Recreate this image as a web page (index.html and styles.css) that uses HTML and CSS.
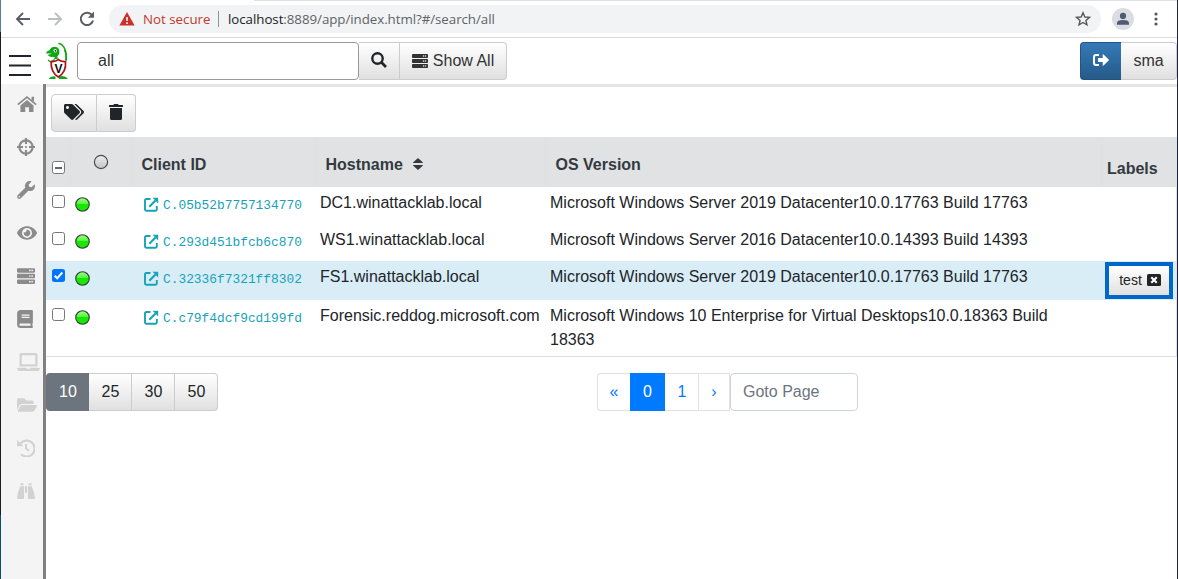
FILE: index.html
```html
<!DOCTYPE html>
<html lang="en">
<head>
<meta charset="utf-8">
<title>Search clients</title>
<link rel="stylesheet" href="styles.css">
</head>
<body>
<svg class="defs" width="0" height="0">
  <defs>
    <linearGradient id="lampGreen" x1="0" y1="0" x2="0" y2="1"><stop offset="0" stop-color="#9dff8a"/><stop offset=".42" stop-color="#5cf545"/><stop offset=".5" stop-color="#12e800"/><stop offset="1" stop-color="#1fe60a"/></linearGradient>
    <linearGradient id="lampGrey" x1="0" y1="0" x2="0" y2="1"><stop offset="0" stop-color="#eeeeee"/><stop offset="1" stop-color="#c4c4c4"/></linearGradient>
    <symbol id="server" viewBox="0 0 512 512"><path fill-rule="evenodd" d="M480 160H32c-17.7 0-32-14.300-32-32V64c0-17.700 14.300-32 32-32h448c17.700 0 32 14.300 32 32v64c0 17.700-14.300 32-32 32zm-48-88a24 24 0 1 0 0 48 24 24 0 0 0 0-48zm-64 0a24 24 0 1 0 0 48 24 24 0 0 0 0-48zM480 320H32c-17.700 0-32-14.300-32-32v-64c0-17.700 14.300-32 32-32h448c17.700 0 32 14.300 32 32v64c0 17.700-14.300 32-32 32zm-48-88a24 24 0 1 0 0 48 24 24 0 0 0 0-48zm-64 0a24 24 0 1 0 0 48 24 24 0 0 0 0-48zM480 480H32c-17.700 0-32-14.300-32-32v-64c0-17.700 14.300-32 32-32h448c17.700 0 32 14.300 32 32v64c0 17.700-14.300 32-32 32zm-48-88a24 24 0 1 0 0 48 24 24 0 0 0 0-48zm-64 0a24 24 0 1 0 0 48 24 24 0 0 0 0-48z"/></symbol>
    <symbol id="external" viewBox="0 0 15 15"><path d="M6.500 2H2.200Q1 2 1 3.200V12.600Q1 13.800 2.200 13.800H11.600Q12.800 13.800 12.800 12.600V9" fill="none" stroke="currentColor" stroke-width="1.900"/><path d="M5.300 9.700L11.500 3.500" stroke="currentColor" stroke-width="2.100"/><path d="M8.600.8H14.200V6.400Z" fill="currentColor"/></symbol>
    <symbol id="lamp" viewBox="0 0 14 14"><circle cx="7" cy="7" r="6.300" fill="url(#lampGreen)" stroke="#334433" stroke-width="1.100"/></symbol>
  </defs>
</svg>
<div class="screen">
  <div class="edge edge-left"></div>
  <div class="window">
    <header class="browser">
      <div class="nav">
        <svg width="16" height="14" viewBox="0 0 16 14"><path d="M15 7H2M8 1L2 7l6 6" fill="none" stroke="#5a5d61" stroke-width="1.900"/></svg>
        <svg width="16" height="14" viewBox="0 0 16 14"><path d="M1 7h13M8 1l6 6-6 6" fill="none" stroke="#bcbfc2" stroke-width="1.900"/></svg>
        <svg width="16" height="16" viewBox="0 0 16 16"><path d="M13 4.200A6.200 6.200 0 1 0 14 9.500" fill="none" stroke="#5a5d61" stroke-width="2"/><path d="M15 .6v6.200H8.800Z" fill="#5a5d61"/></svg>
      </div>
      <div class="omnibox">
        <svg class="warn" width="16" height="14" viewBox="0 0 16 14"><path d="M8 0l7.600 13.500H.4Z" fill="#c9302a"/><path d="M8 5v4M8 10.300v1.600" stroke="#fff" stroke-width="1.500"/></svg>
        <span class="insecure">Not secure</span>
        <span class="bar"></span>
        <span class="url"><b>localhost</b>:8889/app/index.html?#/search/all</span>
        <svg class="star" width="16" height="16" viewBox="0 0 16 16"><path d="M8 1.800l1.850 4.200 4.500.4-3.400 3 1 4.450L8 11.500l-3.950 2.350 1-4.450-3.400-3 4.500-.4Z" fill="none" stroke="#55585c" stroke-width="1.400"/></svg>
      </div>
      <svg class="avatar" width="22" height="22" viewBox="0 0 22 22"><circle cx="11" cy="11" r="11" fill="#dadde2"/><circle cx="11" cy="7.900" r="3.100" fill="#505a70"/><path d="M5 16.800V15q0-3 6-3t6 3v1.800Z" fill="#505a70"/></svg>
      <svg class="dots" width="4" height="14" viewBox="0 0 4 14"><circle cx="2" cy="2" r="1.600"/><circle cx="2" cy="7" r="1.600"/><circle cx="2" cy="12" r="1.600"/></svg>
    </header>

    <div class="topbar">
      <svg class="burger" width="22" height="22" viewBox="0 0 22 22"><path d="M0 1h22M0 10.500h22M0 20h22" stroke="#212529" stroke-width="2"/></svg>
      <svg class="logo" width="24" height="38" viewBox="0 0 24 38"><path d="M12.500 1.200C19 3 20.800 9 20.300 18.500" fill="none" stroke="#0ea817" stroke-width="1.500"/><path d="M18.500 8Q21 13 19.600 18.500" fill="none" stroke="#0ea817" stroke-width="1.500"/><path d="M.2 11.500Q.2 9.300 3.500 8.200Q5 4.800 9 4.800Q13.400 5.200 13.400 9.500Q13.800 13 11.700 14Q10.500 15.500 13 16.500L8 17.200Q8 15.800 9 15Q4 15.500 1.500 12.900L6 11.500Z" fill="#0ea817"/><path d="M2 18l2.500 2 4-2.500" fill="none" stroke="#0ea817" stroke-width="1.300"/><circle cx="9.300" cy="8.800" r="1.700" fill="#fff"/><circle cx="9.500" cy="8.800" r=".9" fill="#222"/><path d="M2.500 37q2.500-3.500 7-2.500v2.500ZM13 37v-2.500q6-1.500 9 2.500Z" fill="#0ea817"/><path d="M12.300 17.700Q15 20 19.500 19.600Q20.500 30 12.300 35Q4.500 30 5.200 19.600Q9.500 20 12.300 17.700Z" fill="#fff" stroke="#b01217" stroke-width="1.700"/><text x="12.400" y="31" class="logo-v">V</text></svg>
      <div class="search">
        <input class="query" value="all" aria-label="Search">
        <button class="btn go" aria-label="Search clients"><svg width="16" height="16" viewBox="0 0 16 16"><circle cx="6.500" cy="6.500" r="5.200" fill="none" stroke="currentColor" stroke-width="2.400"/><path d="M10.300 10.300l4.700 4.700" stroke="currentColor" stroke-width="2.700"/></svg></button>
        <button class="btn all"><svg width="16" height="16"><use href="#server"/></svg>Show All</button>
      </div>
      <div class="account">
        <button class="btn logout" aria-label="Log out"><svg width="16" height="12" viewBox="0 0 16 12"><path d="M6 1H3Q1 1 1 3v6q0 2 2 2h3" fill="none" stroke="#fff" stroke-width="2"/><path d="M5 4h4.700V.6Q9.900 0 10.500.4L15.700 5.600Q16 6 15.700 6.400L10.500 11.600Q9.900 12 9.700 11.400V8H5Z" fill="#fff"/></svg></button>
        <button class="btn user">sma</button>
      </div>
    </div>

    <div class="body">
      <nav class="side">
        <svg width="20" height="17" viewBox="0 0 20 17"><path d="M10 4.500l6.500 5.400v6q0 .6-.6.600H12v-4.700H8.200v4.700H4q-.6 0-.6-.6v-6Z"/><path d="M.8 9.200L10 1.600l9.200 7.600" fill="none" stroke="currentColor" stroke-width="1.700"/><path d="M14.600 1.200H17v5l-2.400-2Z"/></svg>
        <svg width="18" height="18" viewBox="0 0 18 18"><circle cx="9" cy="9" r="6.600" fill="none" stroke="currentColor" stroke-width="2.200"/><path d="M9 0v6M9 12v6M0 9h6M12 9h6" stroke="currentColor" stroke-width="2.200"/><circle cx="9" cy="9" r="1.100"/></svg>
        <svg width="18" height="18" viewBox="0 0 512 512"><path d="M507.730 109.100c-2.240-9.030-13.540-12.090-20.120-5.510l-74.360 74.360-67.880-11.310-11.310-67.880 74.360-74.360c6.620-6.620 3.430-17.900-5.660-20.160-47.380-11.740-99.550.91-136.580 37.930-39.640 39.640-50.550 97.100-34.050 147.200L18.740 402.760c-24.990 24.990-24.990 65.510 0 90.500 24.990 24.990 65.510 24.990 90.500 0l213.210-213.210c50.120 16.710 107.470 5.680 147.370-34.220 37.070-37.070 49.700-89.320 37.910-136.730zM64 472c-13.250 0-24-10.750-24-24 0-13.260 10.750-24 24-24s24 10.740 24 24c0 13.250-10.750 24-24 24z"/></svg>
        <svg width="20" height="18" viewBox="0 0 576 512"><path d="M572.520 241.400C518.290 135.590 410.930 64 288 64S57.680 135.640 3.480 241.410a32.350 32.350 0 0 0 0 29.190C57.710 376.410 165.070 448 288 448s230.320-71.640 284.520-177.410a32.350 32.350 0 0 0 0-29.190zM288 400a144 144 0 1 1 144-144 143.930 143.930 0 0 1-144 144zm0-240a95.310 95.310 0 0 0-25.310 3.790 47.850 47.850 0 0 1-66.900 66.900A95.780 95.780 0 1 0 288 160z"/></svg>
        <svg width="18" height="18"><use href="#server"/></svg>
        <svg class="book" width="16" height="18" viewBox="0 0 448 512"><path d="M448 360V24c0-13.300-10.700-24-24-24H96C43 0 0 43 0 96v320c0 53 43 96 96 96h328c13.300 0 24-10.700 24-24v-16c0-7.500-3.500-14.300-8.900-18.700-4.200-15.400-4.200-59.300 0-74.700 5.400-4.300 8.900-11.100 8.900-18.600zM128 134c0-3.300 2.700-6 6-6h212c3.300 0 6 2.700 6 6v20c0 3.300-2.700 6-6 6H134c-3.300 0-6-2.700-6-6v-20zm0 64c0-3.300 2.700-6 6-6h212c3.300 0 6 2.700 6 6v20c0 3.300-2.700 6-6 6H134c-3.300 0-6-2.700-6-6v-20zm253.400 250H96c-17.700 0-32-14.300-32-32 0-17.600 14.400-32 32-32h285.400c-1.900 17.100-1.900 46.900 0 64z"/></svg>
        <svg class="off" width="23" height="18" viewBox="0 0 640 512"><path d="M624 416H381.540c-.74 19.810-14.710 32-32.740 32H288c-18.690 0-33.020-17.470-32.770-32H16c-8.800 0-16 7.200-16 16v16c0 35.200 28.800 64 64 64h512c35.200 0 64-28.800 64-64v-16c0-8.800-7.200-16-16-16zM576 48c0-26.400-21.600-48-48-48H112C85.600 0 64 21.600 64 48v336h512V48zm-64 272H128V64h384v256z"/></svg>
        <svg class="off" width="20" height="18" viewBox="0 0 576 512"><path d="M572.694 292.093L500.270 416.248A63.997 63.997 0 0 1 444.989 448H45.025c-18.523 0-30.064-20.093-20.731-36.093l72.424-124.155A64 64 0 0 1 152 256h399.964c18.523 0 30.064 20.093 20.730 36.093zM152 224h328v-48c0-26.510-21.490-48-48-48H272l-64-64H48C21.490 64 0 85.490 0 112v278.046l69.077-118.418C86.214 242.250 117.989 224 152 224z"/></svg>
        <svg class="off" width="18" height="18" viewBox="0 0 18 18"><path d="M3.400 4.600A8 8 0 1 1 4 15.200" fill="none" stroke="currentColor" stroke-width="2.200"/><path d="M.1 1v6.300h6.300Z"/><path d="M9 5v4.500l3 2.200" fill="none" stroke="currentColor" stroke-width="2"/></svg>
        <svg class="off" width="18" height="18" viewBox="0 0 18 18"><path d="M3.500 1.200h3v2h-3ZM11.500 1.200h3v2h-3ZM3.200 4.200h3.900V16q0 1-1 1H1q-1 0-1-1 .3-5 2-8.600 1-1.800 1.200-3.200ZM14.800 4.200h-3.900V16q0 1 1 1H17q1 0 1-1-.3-5-2-8.600-1-1.800-1.200-3.200ZM8 4.200h2v6.500H8Z"/></svg>
      </nav>

      <main class="content">
        <div class="tools">
          <button class="btn tag" aria-label="Label clients"><svg width="20" height="16" viewBox="0 0 640 512"><path d="M497.941 225.941L286.059 14.059A48 48 0 0 0 252.118 0H48C21.490 0 0 21.490 0 48v204.118a48 48 0 0 0 14.059 33.941l211.882 211.882c18.744 18.745 49.136 18.746 67.882 0l204.118-204.118c18.745-18.745 18.745-49.137 0-67.882zM112 160c-26.510 0-48-21.490-48-48s21.490-48 48-48 48 21.490 48 48-21.490 48-48 48zm513.941 133.823L421.823 497.941c-18.745 18.745-49.137 18.745-67.882 0l-.36-.36L527.640 323.522c16.999-16.999 26.360-39.600 26.360-63.640s-9.362-46.641-26.360-63.640L331.397 0h48.721a48 48 0 0 1 33.941 14.059l211.882 211.882c18.745 18.745 18.745 49.137 0 67.882z"/></svg></button>
          <button class="btn trash" aria-label="Delete clients"><svg width="14" height="16" viewBox="0 0 448 512"><path d="M432 32H312l-9.400-18.700A24 24 0 0 0 281.100 0H166.800a23.720 23.720 0 0 0-21.400 13.300L136 32H16A16 16 0 0 0 0 48v32a16 16 0 0 0 16 16h416a16 16 0 0 0 16-16V48a16 16 0 0 0-16-16zM32 128v336a48 48 0 0 0 48 48h288a48 48 0 0 0 48-48V128z"/></svg></button>
        </div>
        <div class="table">
          <div class="row head">
            <div><span class="check some"></span></div>
            <div class="state"><svg width="16" height="16" viewBox="0 0 16 16"><circle cx="8" cy="8" r="6.600" fill="url(#lampGrey)" stroke="#4a4d50" stroke-width="1.200"/></svg></div>
            <div class="title">Client ID</div>
            <div class="title">Hostname<svg class="sort" width="10" height="12" viewBox="0 0 10 12"><path d="M0 4.800Q0 4.500.3 4.200L4.400.4Q5 0 5.600.4L9.700 4.200Q10.200 5 9.400 5H.6Q0 5 0 4.800ZM0 7.200Q0 7 .6 7H9.400Q10.200 7 9.700 7.800L5.600 11.600Q5 12 4.400 11.600L.3 7.800Z"/></svg></div>
            <div class="title">OS Version</div>
            <div class="labels-title">Labels</div>
          </div>
          <div class="row">
            <div><span class="check"></span></div><div><svg class="lamp" width="15" height="15"><use href="#lamp"/></svg></div>
            <div class="client"><svg width="15" height="15"><use href="#external"/></svg><span>C.05b52b7757134770</span></div>
            <div>DC1.winattacklab.local</div><div>Microsoft Windows Server 2019 Datacenter10.0.17763 Build 17763</div><div></div>
          </div>
          <div class="row">
            <div><span class="check"></span></div><div><svg class="lamp" width="15" height="15"><use href="#lamp"/></svg></div>
            <div class="client"><svg width="15" height="15"><use href="#external"/></svg><span>C.293d451bfcb6c870</span></div>
            <div>WS1.winattacklab.local</div><div>Microsoft Windows Server 2016 Datacenter10.0.14393 Build 14393</div><div></div>
          </div>
          <div class="row selected">
            <div><span class="check on"><svg width="13" height="13" viewBox="0 0 13 13"><path d="M2.700 6.800l2.500 2.500L10.300 3.500" fill="none" stroke="#fff" stroke-width="2"/></svg></span></div><div><svg class="lamp" width="15" height="15"><use href="#lamp"/></svg></div>
            <div class="client"><svg width="15" height="15"><use href="#external"/></svg><span>C.32336f7321ff8302</span></div>
            <div>FS1.winattacklab.local</div><div>Microsoft Windows Server 2019 Datacenter10.0.17763 Build 17763</div>
            <div class="label-cell"><button class="label">test<svg width="14" height="12" viewBox="0 0 14 12"><rect width="14" height="12" rx="1.500" fill="#212529"/><path d="M4.300 3.300l5.400 5.400M9.700 3.300L4.300 8.700" stroke="#fff" stroke-width="2.100"/></svg></button></div>
          </div>
          <div class="row last">
            <div><span class="check"></span></div><div><svg class="lamp" width="15" height="15"><use href="#lamp"/></svg></div>
            <div class="client"><svg width="15" height="15"><use href="#external"/></svg><span>C.c79f4dcf9cd199fd</span></div>
            <div class="host">Forensic.reddog.microsoft.com</div><div class="os">Microsoft Windows 10 Enterprise for Virtual Desktops10.0.18363 Build 18363</div><div></div>
          </div>
        </div>
        <div class="footer">
          <div class="sizes"><button class="btn active">10</button><button class="btn">25</button><button class="btn">30</button><button class="btn">50</button></div>
          <div class="pages"><a class="first">«</a><a class="current">0</a><a class="one">1</a><a class="next">›</a><input class="goto" placeholder="Goto Page"></div>
        </div>
      </main>
    </div>
  </div>
  <div class="edge edge-right"></div>
</div>
</body>
</html>
```
FILE: styles.css
```css
* { box-sizing: border-box; }
body { margin: 0; background: #fff; color: #212529; font: 16px/24px "Liberation Sans", Arial, sans-serif; overflow: hidden; }
svg { display: block; flex: none; fill: currentColor; }
.defs { position: absolute; }
.screen { display: flex; width: 1178px; height: 579px; }
.edge { width: 1px; flex: none; }
.edge-left { background: linear-gradient(#5b7c92 0 32px, #201e24 32px 515px, #0d4c73 515px); }
.edge-right { background: #1c2449; }
.window { width: 1176px; display: flex; flex-direction: column; }

.browser { height: 38px; flex: none; display: flex; align-items: center; border-bottom: 1px solid #d9dbde; background: linear-gradient(#dee1e6, #dee1e6) 253px 0 / 923px 1px no-repeat; }
.nav { display: flex; align-items: center; gap: 16px; padding-left: 14px; width: 108px; }
.omnibox { width: 992px; height: 28px; border-radius: 14px; background: #f1f3f4; display: flex; align-items: center; padding: 0 10px; font: 13.300px/28px "Open Sans", "Noto Sans", sans-serif; white-space: nowrap; }
.insecure { color: #c5362d; width: 68px; margin-left: 8px; }
.bar { width: 1px; height: 16px; background: #909396; margin: 0 9px 0 7px; }
.url { color: #5f6368; letter-spacing: -.04px; }
.url b { font-weight: 400; color: #202124; }
.star { margin-left: auto; }
.avatar { margin-left: 11px; }
.dots { margin-left: 20px; color: #55585c; }

.topbar { height: 46px; flex: none; display: flex; align-items: flex-start; padding: 4px 0 0 8px; }
.burger { margin-top: 13px; }
.logo { margin: 0 7px 0 15px; }
.logo-v { font: bold 12px "Liberation Sans", sans-serif; text-anchor: middle; fill: #111; }
.search, .account, .tools, .sizes { display: flex; }
.query { width: 282px; height: 38px; border: 1px solid #999; border-radius: 4px; padding: 0 20px; font: inherit; color: #333; outline: 0; background: #fff; }
.btn { height: 38px; border: 1px solid #ccc; border-left-width: 0; padding: 0; display: flex; align-items: center; justify-content: center; background: linear-gradient(#fff, #e0e0e0); font: inherit; color: #212529; }
.go { width: 41px; padding-bottom: 2px; }
.all { width: 107px; gap: 5px; border-radius: 0 4px 4px 0; padding-bottom: 1px; color: #333; }
.account { margin-left: auto; }
.logout { width: 41px; border: 1px solid #245580; border-right-width: 0; border-radius: 4px 0 0 4px; padding-bottom: 2px; background: linear-gradient(#337ab7, #265a88); }
.user { width: 56px; border-radius: 0 4px 4px 0; color: #333; padding-bottom: 1px; }

.body { flex: 1; display: flex; }
.side { width: 45px; border-right: 3px solid #808080; background: #f4f4f4; padding: 11px 0 0 16px; color: #8b8b8b; }
.side svg { height: 18px; margin-bottom: 25px; }
.side .off { color: #d2d2d2; }
.content { width: 1131px; border-top: 3px solid #e5e5e5; }
.tools { padding: 7px 0 0 5px; height: 50px; }
.tag { width: 46px; border-left-width: 1px; border-radius: 4px 0 0 4px; padding-bottom: 2px; }
.trash { width: 39px; border-radius: 0 4px 4px 0; padding-bottom: 2px; }
.table { border: 1px solid #dee2e6; border-width: 0 1px 1px 0; }
.row { display: grid; grid-template-columns: 25px 61px 184px 230px 556px 1fr; height: 37px; }
.row > div { padding: 4px 4px 0; white-space: nowrap; }
.row > div:first-child { padding: 8px 0 0 6px; }
.row > div:nth-child(2) { padding: 9.500px 0 0 3.500px; }
.row.head { height: 50px; background: #e0e2e4; color: #343a40; font-weight: 700; }
.head > div { border-right: 1px solid #dee0e3; }
.row.head > div:first-child { padding-top: 24px; }
.row .title { display: flex; padding: 16px 9px 0 9.500px; }
.row > .labels-title { padding: 20px 4px 0 5px; border: 0; }
.row.head > .state { padding: 17px 0 0 22px; }
.sort { margin: 5px 0 0 10px; }
.check { display: block; width: 13px; height: 13px; border: 1px solid #767676; border-radius: 2.500px; background: #fff; }
.check.some { background: linear-gradient(#666, #666) center / 7px 2px no-repeat #fff; }
.check.on { background: #0075ff; border: 0; }
.row > .client { display: flex; color: #17a2b8; padding: 10px 0 0 12px; font: 12.870px/18px "Liberation Mono", monospace; }
.client span { margin-left: 4px; }
.row.selected { height: 39px; background: #d9edf7; }
.row.last { height: 56px; }
.row > .os { white-space: normal; padding-right: 40px; }
.row > .label-cell { padding: 1px 0 0 3px; }
.label { display: flex; align-items: center; justify-content: center; gap: 5px; width: 68px; height: 37px; border: 4px solid #0066cc; padding: 0 0 1px 2px; background: linear-gradient(#fff, #e0e0e0); font: 14px "Liberation Sans", Arial, sans-serif; color: #212529; }
.footer { display: flex; padding-top: 16px; }
.sizes .btn { width: 43px; padding: 0 0 1px 1px; }
.sizes .btn:last-child { border-radius: 0 4px 4px 0; }
.sizes .active { background: #6c757d; color: #fff; border: 0; border-radius: 4px 0 0 4px; }
.pages { display: flex; margin-left: 379px; }
.pages a { height: 38px; border: 1px solid #dee2e6; border-left: 0; color: #007bff; line-height: 35px; text-align: center; }
.pages .first { width: 33px; border: 1px solid #dee2e6; border-right: 0; border-radius: 4px 0 0 4px; }
.pages .current { width: 35px; background: #007bff; color: #fff; border-color: #007bff; padding-left: 1px; }
.pages .one { width: 34px; padding-left: 1px; }
.pages .next { width: 31px; }
.goto { width: 128px; height: 38px; border: 1px solid #ced4da; border-radius: 4px; padding: 0 12px 1px; font: inherit; }
.goto::placeholder { color: #6c757d; }
```
